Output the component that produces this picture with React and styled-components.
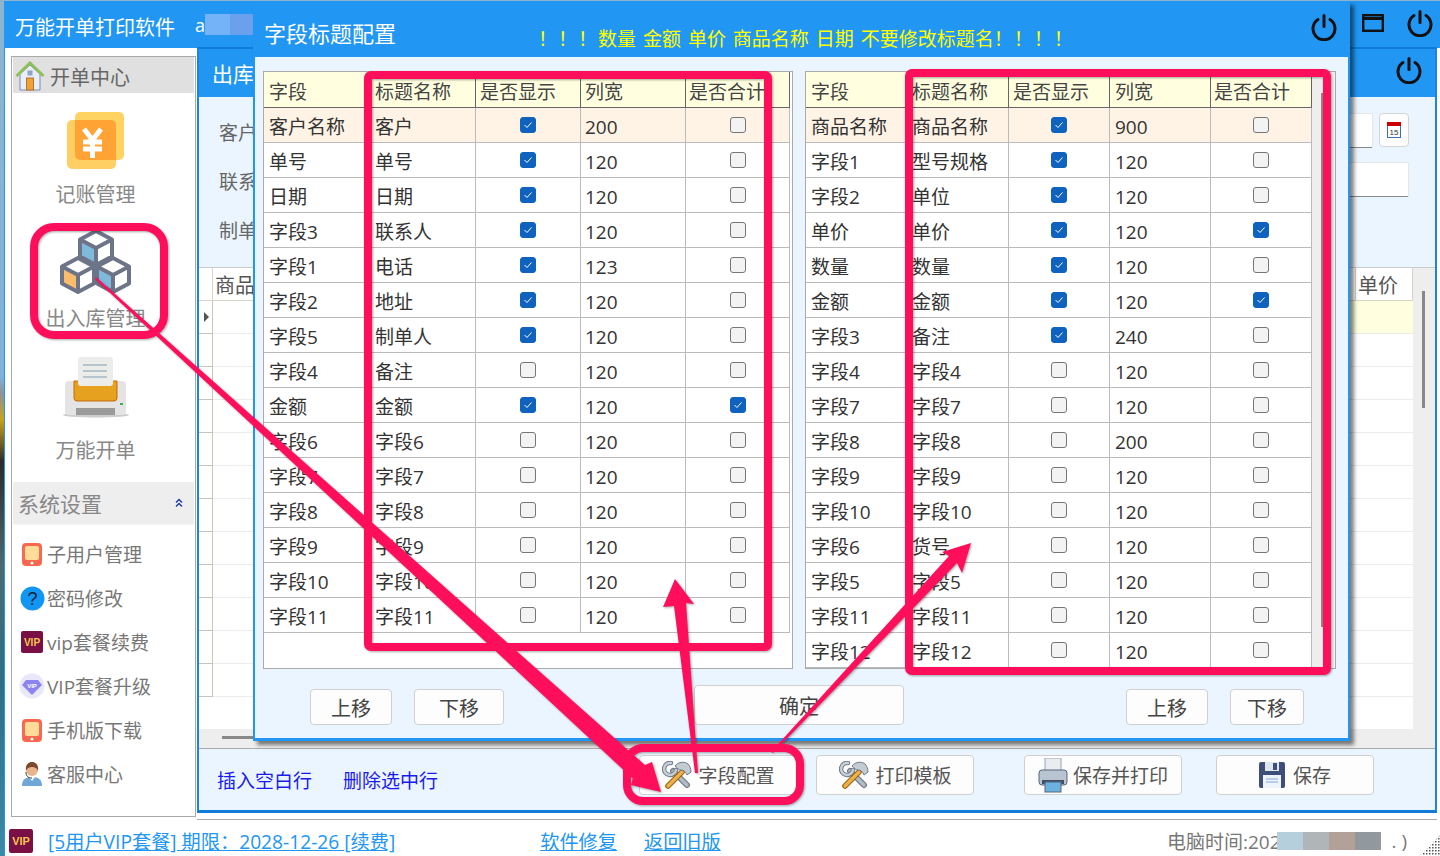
import React from 'react';
import styled, { createGlobalStyle } from 'styled-components';

const BLUE = '#2196f3';
const PINK = '#ff0f5b';

const leftRows = [
  ['客户名称', '客户', 1, 200, 0],
  ['单号', '单号', 1, 120, 0],
  ['日期', '日期', 1, 120, 0],
  ['字段3', '联系人', 1, 120, 0],
  ['字段1', '电话', 1, 123, 0],
  ['字段2', '地址', 1, 120, 0],
  ['字段5', '制单人', 1, 120, 0],
  ['字段4', '备注', 0, 120, 0],
  ['金额', '金额', 1, 120, 1],
  ['字段6', '字段6', 0, 120, 0],
  ['字段7', '字段7', 0, 120, 0],
  ['字段8', '字段8', 0, 120, 0],
  ['字段9', '字段9', 0, 120, 0],
  ['字段10', '字段10', 0, 120, 0],
  ['字段11', '字段11', 0, 120, 0],
];

const rightRows = [
  ['商品名称', '商品名称', 1, 900, 0],
  ['字段1', '型号规格', 1, 120, 0],
  ['字段2', '单位', 1, 120, 0],
  ['单价', '单价', 1, 120, 1],
  ['数量', '数量', 1, 120, 0],
  ['金额', '金额', 1, 120, 1],
  ['字段3', '备注', 1, 240, 0],
  ['字段4', '字段4', 0, 120, 0],
  ['字段7', '字段7', 0, 120, 0],
  ['字段8', '字段8', 0, 200, 0],
  ['字段9', '字段9', 0, 120, 0],
  ['字段10', '字段10', 0, 120, 0],
  ['字段6', '货号', 0, 120, 0],
  ['字段5', '字段5', 0, 120, 0],
  ['字段11', '字段11', 0, 120, 0],
  ['字段12', '字段12', 0, 120, 0],
];

const GlobalStyle = createGlobalStyle`
  html, body {
    margin: 0;
    padding: 0;
    background: white;
    font-family: "Open Sans", "Noto Sans CJK SC", sans-serif;
  }
  * {
    box-sizing: border-box;
  }
`;

const Desktop = styled.div`
  position: relative;
  width: 1440px;
  height: 856px;
  overflow: hidden;
  background: linear-gradient(#8fb4cf 0, #7fb2dc 44%, #8d9298 46%, #c9a11d 49%, #2a2b2c 54%, #4a6a70 66%, #2c6f88 80%, #3b8aa8 100%);
`;

const MainWindow = styled.div`
  position: absolute;
  left: 4px;
  top: 1px;
  width: 1436px;
  height: 855px;
  display: flex;
  flex-direction: column;
  background: white;
  border-left: 1px solid ${BLUE};
`;

const TitleBar = styled.div`
  height: 47px;
  flex: none;
  display: flex;
  align-items: center;
  background: ${BLUE};
  padding-left: 10px;
`;

const AppName = styled.div`
  color: white;
  font-size: 20px;
  line-height: 28px;
  margin-top: 7px;
`;

const UserName = styled.div`
  display: flex;
  align-items: center;
  margin-left: 20px;
  color: white;
  font-size: 18px;
`;

const BlurBlock = styled.div`
  width: 25px;
  height: 21px;
  background: ${(p) => p.$color};
`;

const WindowButtons = styled.div`
  margin-left: auto;
  display: flex;
  align-items: center;
  gap: 22px;
  padding-right: 6px;
  margin-top: -3px;
`;

const Body = styled.div`
  flex: 1;
  min-height: 0;
  display: flex;
`;

const SidePanel = styled.div`
  width: 185px;
  margin: 8px 1px 3px 6px;
  border: 1px solid #aaa;
  padding: 0 1px;
  background: white;
`;

const CenterHead = styled.div`
  height: 36px;
  display: flex;
  align-items: center;
  gap: 5px;
  padding: 2px 0 0 2px;
  background: #e0e0e0;
  color: #666;
  font-size: 20px;
`;

const Tile = styled.div`
  width: 165px;
  display: flex;
  flex-direction: column;
  align-items: center;
  padding-top: ${(p) => p.$top}px;
  color: #888;
  font-size: 20px;
`;

const TileLabel = styled.div`
  line-height: 28px;
  margin-top: ${(p) => p.$gap}px;
`;

const SectionHead = styled.div`
  height: 43px;
  margin-top: 17px;
  display: flex;
  align-items: center;
  justify-content: space-between;
  padding: 0 11px 0 5px;
  background: #eee;
  border-bottom: 1px solid #f6f6f6;
  color: #888;
  font-size: 21px;
`;

const NavList = styled.div`
  margin-top: 7px;
`;

const NavRow = styled.div`
  height: 44px;
  display: flex;
  align-items: center;
  padding-left: 4px;
  color: #777;
  font-size: 19px;
`;

const NavIcon = styled.div`
  width: 30px;
  display: flex;
  justify-content: center;
  align-items: center;
`;

const WorkWrap = styled.div`
  width: 1240px;
  margin-top: -1px;
  display: flex;
  flex-direction: column;
  border-bottom: 1px solid #aaa;
  padding-bottom: 6px;
`;

const WorkWindow = styled.div`
  flex: 1;
  min-height: 0;
  display: flex;
  flex-direction: column;
  background: #ebf5ff;
  border: 2px solid #1a84e2;
  border-top-color: #0f7ad8;
  border-bottom-width: 3px;
  border-bottom-color: #0f7ad8;
`;

const WorkTitle = styled.div`
  height: 48px;
  flex: none;
  display: flex;
  align-items: center;
  justify-content: space-between;
  padding: 0 12px 0 13px;
  background: ${BLUE};
  color: white;
  font-size: 21px;
`;

const WorkPower = styled.div`
  line-height: 0;
  margin-top: -6px;
`;

const FormArea = styled.div`
  height: 170px;
  flex: none;
  padding: 16px 26px 0 20px;
`;

const FormRow = styled.div`
  height: 35px;
  margin-bottom: 14px;
  display: flex;
  gap: 6px;
`;

const FormLabel = styled.div`
  margin-right: auto;
  padding-top: 3px;
  line-height: 35px;
  color: #666;
  font-size: 19px;
`;

const Input = styled.div`
  width: ${(p) => p.$w}px;
  height: 35px;
  background: white;
  border: 1px solid #e6e6e6;
  border-bottom-color: #888;
  border-radius: 2px;
`;

const CalendarButton = styled.div`
  width: 30px;
  height: 34px;
  display: flex;
  align-items: center;
  justify-content: center;
  background: #fdfdfd;
  border: 1px solid #d4d4d4;
  border-radius: 4px;
`;

const GridArea = styled.div`
  flex: 1;
  min-height: 0;
  display: flex;
  flex-direction: column;
  background: #eee;
  border-top: 1px solid #ccc;
`;

const GridMain = styled.div`
  height: 458px;
  flex: none;
  display: flex;
`;

const Grid = styled.div`
  width: 1214px;
  background: white;
`;

const GridHead = styled.div`
  height: 33px;
  display: flex;
  border-bottom: 1px solid #d8d4c8;
  color: #555;
  font-size: 20px;
`;

const GridHeadCell = styled.div`
  width: ${(p) => p.$w}px;
  flex: ${(p) => (p.$w ? 'none' : 1)};
  padding-left: 2px;
  line-height: 35px;
  border-right: 1px solid #d8d4c8;
`;

const GridRow = styled.div`
  height: 33px;
  display: flex;
  border-bottom: 1px solid #ececec;
`;

const RowHead = styled.div`
  width: 14px;
  flex: none;
  display: flex;
  align-items: center;
  padding-left: 5px;
  border-right: 1px solid #c8c4b8;
  border-bottom: 1px solid #c8c4b8;
  margin-bottom: -1px;
`;

const RowPointer = styled.div`
  border-left: 5px solid #555;
  border-top: 5px solid transparent;
  border-bottom: 5px solid transparent;
`;

const RowFill = styled.div`
  flex: 1;
  background: ${(p) => (p.$active ? 'linear-gradient(to right, white 60%, #ffffe0 60%)' : 'white')};
`;

const VerticalTrack = styled.div`
  flex: 1;
  padding: 23px 0 0 9px;
`;

const VerticalThumb = styled.div`
  width: 3px;
  height: 117px;
  background: #888;
`;

const HorizontalTrack = styled.div`
  flex: 1;
  padding: 10px 0 0 23px;
`;

const HorizontalThumb = styled.div`
  width: 900px;
  height: 3px;
  background: #888;
`;

const Footer = styled.div`
  height: 62px;
  flex: none;
  display: flex;
  align-items: flex-start;
  padding: 6px 0 0 18px;
  border-top: 1px solid #aaa;
`;

const ActionLink = styled.a`
  margin: 9px 31px 0 0;
  line-height: 34px;
  color: #1a1aee;
  font-size: 19px;
`;

const ToolButton = styled.div`
  width: 158px;
  height: 40px;
  margin-left: ${(p) => p.$left}px;
  display: flex;
  align-items: center;
  justify-content: center;
  gap: ${(p) => p.$gap || 7}px;
  background: #fdfdfd;
  border: 1px solid #d0d0d0;
  border-radius: 4px;
  color: #555;
  font-size: 19px;
`;

const StatusBar = styled.div`
  height: 36px;
  flex: none;
  display: flex;
  align-items: center;
  padding: 5px 0 0 4px;
  font-size: 19.2px;
`;

const StatusLink = styled.a`
  margin-left: ${(p) => p.$left}px;
  color: ${BLUE};
  text-decoration: underline;
  white-space: nowrap;
`;

const ClockText = styled.div`
  margin-left: auto;
  display: flex;
  align-items: center;
  color: #777;
  font-size: 19px;
  white-space: nowrap;
`;

const ClockBlur = styled.div`
  width: 26px;
  height: 18px;
  margin-left: ${(p) => p.$left || 0}px;
  background: ${(p) => p.$color};
`;

const ClockTail = styled.span`
  padding-left: 6px;
`;

const Grip = styled.div`
  margin: 0 0 0 13px;
  align-self: flex-end;
  line-height: 0;
`;

const Dialog = styled.div`
  position: absolute;
  left: 253px;
  top: 1px;
  width: 1097px;
  height: 740px;
  display: flex;
  flex-direction: column;
  background: #ebf5ff;
  border: 2px solid ${BLUE};
  border-top: 0;
  border-bottom-width: 3px;
  box-shadow: 4px 4px 4px rgba(0, 0, 0, 0.5);
`;

const DialogTitle = styled.div`
  height: 56px;
  flex: none;
  display: flex;
  align-items: center;
  margin: 0 -2px;
  padding: 0 12px 0 11px;
  background: ${BLUE};
`;

const DialogName = styled.div`
  width: 274px;
  color: white;
  font-size: 22px;
  margin-top: 5px;
`;

const Warning = styled.div`
  margin-top: 18px;
  color: #ffff00;
  font-size: 19px;
  word-spacing: 2px;
  white-space: pre;
`;

const Bang = styled.span`
  letter-spacing: 1px;
`;

const PowerSlot = styled.div`
  margin: -4px 0 0 auto;
  line-height: 0;
`;

const Tables = styled.div`
  display: flex;
  gap: 12px;
  padding: 14px 0 0 8px;
`;

const TableBox = styled.div`
  width: ${(p) => p.$w}px;
  height: 598px;
  display: flex;
  background: white;
  border: 1px solid #aaa;
  overflow: hidden;
`;

const TableColumn = styled.div`
  flex: none;
`;

const TableRow = styled.div`
  height: ${(p) => (p.$head ? 36 : 35)}px;
  display: grid;
  grid-template-columns: ${(p) => p.$cols};
  background: ${(p) => (p.$head ? '#ffffe0' : p.$active ? '#fff3e6' : 'white')};
  border-bottom: 1px solid ${(p) => (p.$head ? '#666' : '#bbb')};
  color: ${(p) => (p.$head ? '#444' : '#333')};
  font-size: 19px;
`;

const TableCell = styled.div`
  padding: ${(p) => (p.$head ? 5 : 4)}px 0 0 ${(p) => p.$pad}px;
  line-height: 30px;
  white-space: nowrap;
  overflow: hidden;
  border-right: 1px solid ${(p) => (p.$head ? '#666' : '#bbb')};
`;

const CheckCell = styled.div`
  display: flex;
  align-items: center;
  justify-content: center;
  padding-bottom: 1px;
  border-right: 1px solid #bbb;
`;

const CheckBox = styled.span`
  width: 16px;
  height: 16px;
  display: flex;
  align-items: center;
  justify-content: center;
  background: ${(p) => (p.$on ? '#0f62bd' : '#f3f3f3')};
  border: 1px solid ${(p) => (p.$on ? '#0f62bd' : '#767676')};
  border-radius: 3px;
`;

const TableScroll = styled.div`
  flex: 1;
  background: #eee;
  padding: 21px 0 0 9px;
`;

const TableThumb = styled.div`
  width: 3px;
  height: 534px;
  background: #888;
`;

const DialogButtons = styled.div`
  display: flex;
  align-items: flex-end;
  margin-top: 16px;
`;

const DialogButton = styled.div`
  width: ${(p) => p.$w}px;
  height: ${(p) => p.$h || 36}px;
  margin-left: ${(p) => p.$left}px;
  display: flex;
  align-items: center;
  justify-content: center;
  background: #fdfdfd;
  border: 1px solid #d0d0d0;
  border-radius: 4px;
  color: #444;
  font-size: 20px;
`;

const Overlay = styled.svg`
  position: absolute;
  left: 0;
  top: 0;
  pointer-events: none;
  filter: drop-shadow(1px 1px 1px rgba(0, 0, 0, 0.35));
`;

const PowerIcon = ({ size = 28 }) => (
  <svg width={size} height={size} viewBox="0 0 28 28" fill="none" stroke="#111" strokeWidth="3" strokeLinecap="round">
    <path d="M8 6.5a11 11 0 1 0 12 0" />
    <path d="M14 2.5v11" />
  </svg>
);

const MaxIcon = () => (
  <svg width="22" height="18" viewBox="0 0 22 18" fill="none" stroke="#111">
    <rect x="1.2" y="1.2" width="19.6" height="15.6" strokeWidth="2.4" />
    <path d="M1 4.5h20" strokeWidth="3" />
  </svg>
);

const HomeIcon = () => (
  <svg width="30" height="30" viewBox="0 0 30 30">
    <path d="M5 13L15 4l10 9v16H5z" fill="#e9eef8" stroke="#7c8cae" />
    <path d="M1.5 15L15 2l13.500 13" fill="none" stroke="#8fbf5a" strokeWidth="3" />
    <rect x="11.500" y="17" width="7" height="12" fill="#eda23c" stroke="#b5762a" />
    <rect x="12.500" y="9.500" width="5" height="5" fill="#8fa3c8" />
  </svg>
);

const YenIcon = () => (
  <svg width="58" height="60" viewBox="0 0 58 60">
    <rect x="8" y="2" width="49" height="48" rx="5" fill="#ffd362" />
    <rect x="0" y="10" width="49" height="49" rx="5" fill="#ffcf63" />
    <path d="M13 10h31a5 5 0 0 1 5 5v35H13a5 5 0 0 1-5-5V10z" fill="#ffa434" />
    <path d="M17 19l8.500 11 8.500-11M16 32h19M16 39h19M25.500 30v18" fill="none" stroke="white" strokeWidth="5" />
  </svg>
);

const Cube = ({ x, y, face }) => (
  <g transform={`translate(${x} ${y})`} strokeLinejoin="round">
    <path d="M0 -17L16 -8.500V8.500L0 17L-16 8.500V-8.500z" fill="white" />
    <path d="M-16 -8.500L0 0V17L-16 8.500z" fill={face} />
    <path d="M0 -17L16 -8.500V8.500L0 17L-16 8.500V-8.500zM-16 -8.500L0 0L16 -8.500M0 0V17" fill="none" stroke="#6e7487" strokeWidth="4" />
  </g>
);

const CubesIcon = () => (
  <svg width="72" height="66" viewBox="0 0 72 66">
    <Cube x={36} y={19} face="#7fb9dc" />
    <Cube x={18} y={46} face="#fbbd6c" />
    <Cube x={53} y={46} face="#7fb9dc" />
  </svg>
);

const PrinterIcon = () => (
  <svg width="70" height="62" viewBox="0 0 70 62">
    <ellipse cx="35" cy="58" rx="33" ry="2.500" fill="#ccc" />
    <rect x="4" y="24" width="61" height="34" rx="4" fill="#e4e4e4" />
    <path d="M13 24h43v17a3 3 0 0 1-3 3H16a3 3 0 0 1-3-3z" fill="#e6a21f" stroke="#c4690e" />
    <rect x="17" y="0" width="35" height="29" rx="3" fill="#ecedea" />
    <path d="M22 8h24M22 14h24M22 20h24" stroke="#a4b6c4" strokeWidth="1.500" />
    <rect x="15" y="51" width="39" height="7" fill="#9a9a9a" />
    <rect x="59" y="46" width="3" height="2" fill="#37b24d" />
  </svg>
);

const TabletIcon = () => (
  <svg width="20" height="23" viewBox="0 0 20 23">
    <rect x="0" y="0" width="20" height="23" rx="4" fill="#f9694f" />
    <rect x="3" y="3" width="14" height="14" rx="2" fill="#ffdc97" />
    <circle cx="10" cy="20" r="1.500" fill="white" />
  </svg>
);

const HelpIcon = () => (
  <svg width="25" height="25" viewBox="0 0 25 25">
    <circle cx="12.500" cy="12.500" r="12" fill="#1296f3" />
    <text x="12.500" y="19" textAnchor="middle" fontSize="18" fill="#123" fontFamily="Liberation Sans">?</text>
  </svg>
);

const VipIcon = ({ size = 22 }) => (
  <svg width={size} height={size} viewBox="0 0 22 22">
    <rect width="22" height="22" rx="2" fill="#7a0f45" />
    <text x="11" y="15" textAnchor="middle" fontSize="10" fontWeight="700" fill="#f5c84c" fontFamily="Liberation Sans">VIP</text>
  </svg>
);

const DiamondIcon = () => (
  <svg width="26" height="26" viewBox="0 0 26 26">
    <circle cx="13" cy="13" r="12.500" fill="#e8e8f8" />
    <path d="M7 7h12l4 5-10 10L3 12z" fill="#8b83f0" />
    <text x="13" y="14.500" textAnchor="middle" fontSize="6" fontWeight="700" fill="white" fontFamily="Liberation Sans">VIP</text>
  </svg>
);

const AgentIcon = () => (
  <svg width="20" height="24" viewBox="0 0 20 24">
    <path d="M0 24c0-7 4-9 10-9s10 2 10 9z" fill="#6fa8d8" />
    <path d="M7 15l3 4 3-4z" fill="white" />
    <circle cx="10" cy="8" r="6" fill="#e8b48f" />
    <path d="M4 9C3 2 7 0 10 0s7 2 6 9c-1-3-3-4-6-4S5 6 4 9z" fill="#7a4a2a" />
    <path d="M4 10c0 4 2 6 6 6" fill="none" stroke="#333" />
  </svg>
);

const ToolsIcon = () => (
  <svg width="30" height="28" viewBox="0 0 30 28" fill="none">
    <path d="M11 10l14 14" stroke="#6f7b86" strokeWidth="6" strokeLinecap="round" />
    <path d="M11 10l14 14" stroke="#b4bdc6" strokeWidth="3.500" strokeLinecap="round" />
    <path d="M9 2a6 6 0 1 0 5 7" stroke="#6f7b86" strokeWidth="4.500" strokeLinecap="round" />
    <path d="M9 2a6 6 0 1 0 5 7" stroke="#c6ced6" strokeWidth="2.500" strokeLinecap="round" />
    <path d="M20 11L6 25" stroke="#9a6510" strokeWidth="5.500" strokeLinecap="round" />
    <path d="M20 11L6 25" stroke="#f0b04a" strokeWidth="3.200" strokeLinecap="round" />
    <path d="M13 5c3-4 9-5 13-2 2 2 3 5 3 8l-4 3c-1-3-3-5-6-5-2 0-4-2-6-4z" fill="#c3cbd3" stroke="#6f7b86" />
  </svg>
);

const SavePrintIcon = () => (
  <svg width="30" height="35" viewBox="0 0 30 35">
    <rect x="7" y="0" width="16" height="14" fill="#e9edf2" stroke="#9aa5b1" />
    <rect x="1" y="12" width="28" height="15" rx="3" fill="#b9c4d2" stroke="#56667c" />
    <rect x="4" y="22" width="22" height="4" fill="#3f5068" />
    <rect x="7" y="24" width="16" height="10" fill="#6cb2e0" stroke="#56667c" />
  </svg>
);

const SaveIcon = () => (
  <svg width="26" height="26" viewBox="0 0 26 26">
    <rect width="26" height="26" rx="2" fill="#3d4e78" />
    <rect x="6" y="0" width="14" height="9" fill="#dfe5ee" />
    <rect x="14" y="1" width="4" height="7" fill="#3d4e78" />
    <rect x="4" y="13" width="18" height="13" fill="#eef3f9" />
    <path d="M7 17h12M7 20h12" stroke="#7ea8d8" />
  </svg>
);

const CalendarIcon = () => (
  <svg width="14" height="16" viewBox="0 0 14 16">
    <rect x="0.500" y="0.500" width="13" height="15" fill="white" stroke="#3b6fb8" />
    <rect width="14" height="4" fill="#cc0000" />
    <text x="7" y="13" textAnchor="middle" fontSize="8" fill="#333" fontFamily="Liberation Sans">15</text>
  </svg>
);

const Chevrons = () => (
  <svg width="8" height="10" viewBox="0 0 8 10" fill="none" stroke="#1a3a9c" strokeWidth="1.400">
    <path d="M1 4.500L4 1.500l3 3M1 8.500L4 5.500l3 3" />
  </svg>
);

const GripIcon = () => (
  <svg width="20" height="21" viewBox="0 0 20 21">
    <defs>
      <pattern id="grip" width="3" height="3" patternUnits="userSpaceOnUse">
        <rect width="1.500" height="1.500" fill="#555" />
      </pattern>
    </defs>
    <path d="M20 0V21H0z" fill="url(#grip)" />
  </svg>
);

const Tick = () => (
  <svg width="10" height="8" viewBox="0 0 10 8" fill="none" stroke="white" strokeWidth="1">
    <path d="M1.500 4l2.500 2.500L8.500 1.500" />
  </svg>
);

const ConfigTable = ({ rows, cols, width, scroll, titlePad, sizePad, headPad }) => (
  <TableBox $w={width}>
    <TableColumn>
      <TableRow $head $cols={cols}>
        <TableCell $head $pad={5}>字段</TableCell>
        <TableCell $head $pad={titlePad}>标题名称</TableCell>
        <TableCell $head $pad={headPad}>是否显示</TableCell>
        <TableCell $head $pad={sizePad}>列宽</TableCell>
        <TableCell $head $pad={headPad - 1}>是否合计</TableCell>
      </TableRow>
      {rows.map(([field, title, show, size, sum], i) => (
        <TableRow key={field + title} $cols={cols} $active={i === 0}>
          <TableCell $pad={5}>{field}</TableCell>
          <TableCell $pad={titlePad}>{title}</TableCell>
          <CheckCell>
            <CheckBox $on={show}>{show ? <Tick /> : null}</CheckBox>
          </CheckCell>
          <TableCell $pad={sizePad}>{size}</TableCell>
          <CheckCell>
            <CheckBox $on={sum}>{sum ? <Tick /> : null}</CheckBox>
          </CheckCell>
        </TableRow>
      ))}
    </TableColumn>
    {scroll ? (
      <TableScroll>
        <TableThumb />
      </TableScroll>
    ) : null}
  </TableBox>
);

const navItems = [
  ['子用户管理', <TabletIcon key="a" />],
  ['密码修改', <HelpIcon key="b" />],
  ['vip套餐续费', <VipIcon key="c" />],
  ['VIP套餐升级', <DiamondIcon key="d" />],
  ['手机版下载', <TabletIcon key="e" />],
  ['客服中心', <AgentIcon key="f" />],
];

const gridRows = Array.from({ length: 13 }, (_, i) => i);

const Annotations = () => (
  <Overlay width="1440" height="856" viewBox="0 0 1440 856">
    <g fill="none" stroke={PINK} strokeWidth="8">
      <rect x="368" y="75" width="400" height="572" rx="3" />
      <rect x="909" y="73" width="418" height="598" rx="3" />
      <rect x="34" y="227" width="130" height="108" rx="20" />
      <rect x="627" y="748" width="173" height="53" rx="16" />
    </g>
    <g fill={PINK}>
      <polygon points="96,277 644.900,765.100 652,762 661,792 631,785 632.700,778.500 95,279" />
      <polygon points="675,579 694,604 686,603 698,773 695,773 674,606 663,607" />
      <polygon points="971,543 962,573 957,563 773,753 771,752 949,556 942,552" />
    </g>
  </Overlay>
);

const App = () => (
  <Desktop>
    <GlobalStyle />
    <MainWindow>
      <TitleBar>
        <AppName>万能开单打印软件</AppName>
        <UserName>
          a
          <BlurBlock $color="#74b3f7" />
          <BlurBlock $color="#6ba0ec" />
        </UserName>
        <WindowButtons>
          <MaxIcon />
          <PowerIcon />
        </WindowButtons>
      </TitleBar>
      <Body>
        <SidePanel>
          <CenterHead>
            <HomeIcon />
            开单中心
          </CenterHead>
          <Tile $top={17}>
            <YenIcon />
            <TileLabel $gap={11}>记账管理</TileLabel>
          </Tile>
          <Tile $top={20}>
            <CubesIcon />
            <TileLabel $gap={10}>出入库管理</TileLabel>
          </Tile>
          <Tile $top={24}>
            <PrinterIcon />
            <TileLabel $gap={18}>万能开单</TileLabel>
          </Tile>
          <SectionHead>
            系统设置
            <Chevrons />
          </SectionHead>
          <NavList>
            {navItems.map(([label, icon]) => (
              <NavRow key={label}>
                <NavIcon>{icon}</NavIcon>
                <span>{label}</span>
              </NavRow>
            ))}
          </NavList>
        </SidePanel>
        <WorkWrap>
          <WorkWindow>
            <WorkTitle>
              出库
              <WorkPower>
                <PowerIcon />
              </WorkPower>
            </WorkTitle>
            <FormArea>
              <FormRow>
                <FormLabel>客户</FormLabel>
                <Input $w={273} />
                <CalendarButton>
                  <CalendarIcon />
                </CalendarButton>
              </FormRow>
              <FormRow>
                <FormLabel>联系</FormLabel>
                <Input $w={309} />
              </FormRow>
              <FormRow>
                <FormLabel>制单</FormLabel>
              </FormRow>
            </FormArea>
            <GridArea>
              <GridMain>
                <Grid>
                  <GridHead>
                    <GridHeadCell $w={14} />
                    <GridHeadCell $w={1143}>商品</GridHeadCell>
                    <GridHeadCell>单价</GridHeadCell>
                  </GridHead>
                  {gridRows.map((i) => (
                    <GridRow key={i}>
                      {i < 12 ? (
                        <RowHead>{i === 0 ? <RowPointer /> : null}</RowHead>
                      ) : null}
                      <RowFill $active={i === 0} />
                    </GridRow>
                  ))}
                </Grid>
                <VerticalTrack>
                  <VerticalThumb />
                </VerticalTrack>
              </GridMain>
              <HorizontalTrack>
                <HorizontalThumb />
              </HorizontalTrack>
            </GridArea>
            <Footer>
              <ActionLink>插入空白行</ActionLink>
              <ActionLink>删除选中行</ActionLink>
              <ToolButton $left={170}>
                <ToolsIcon />
                字段配置
              </ToolButton>
              <ToolButton $left={19}>
                <ToolsIcon />
                打印模板
              </ToolButton>
              <ToolButton $left={50} $gap={5}>
                <SavePrintIcon />
                保存并打印
              </ToolButton>
              <ToolButton $left={34} $gap={8}>
                <SaveIcon />
                保存
              </ToolButton>
            </Footer>
          </WorkWindow>
        </WorkWrap>
      </Body>
      <StatusBar>
        <VipIcon size={24} />
        <StatusLink $left={15}>[5用户VIP套餐] 期限：2028-12-26 [续费]</StatusLink>
        <StatusLink $left={145}>软件修复</StatusLink>
        <StatusLink $left={27}>返回旧版</StatusLink>
        <ClockText>
          电脑时间:202
          <ClockBlur $color="#b5cfdc" $left={-4} />
          <ClockBlur $color="#b0b6b8" />
          <ClockBlur $color="#b3a198" />
          <ClockBlur $color="#91999f" />
          <ClockTail>&nbsp;.&nbsp;)</ClockTail>
        </ClockText>
        <Grip>
          <GripIcon />
        </Grip>
      </StatusBar>
    </MainWindow>
    <Dialog>
      <DialogTitle>
        <DialogName>字段标题配置</DialogName>
        <Warning>
          <Bang>！！！</Bang>数量 金额 单价 商品名称 日期 不要修改标题名<Bang>！！！！</Bang>
        </Warning>
        <PowerSlot>
          <PowerIcon />
        </PowerSlot>
      </DialogTitle>
      <Tables>
        <ConfigTable
          rows={leftRows}
          cols="107px 105px 105px 105px 104px"
          width={530}
          titlePad={4}
          sizePad={4}
          headPad={4}
        />
        <ConfigTable
          rows={rightRows}
          cols="101px 102px 101px 101px 101px"
          width={531}
          titlePad={5}
          sizePad={5}
          headPad={4}
          scroll
        />
      </Tables>
      <DialogButtons>
        <DialogButton $w={82} $left={55}>上移</DialogButton>
        <DialogButton $w={90} $left={22}>下移</DialogButton>
        <DialogButton $w={210} $h={40} $left={190}>确定</DialogButton>
        <DialogButton $w={82} $left={222}>上移</DialogButton>
        <DialogButton $w={74} $left={22}>下移</DialogButton>
      </DialogButtons>
    </Dialog>
    <Annotations />
  </Desktop>
);

export default App;
